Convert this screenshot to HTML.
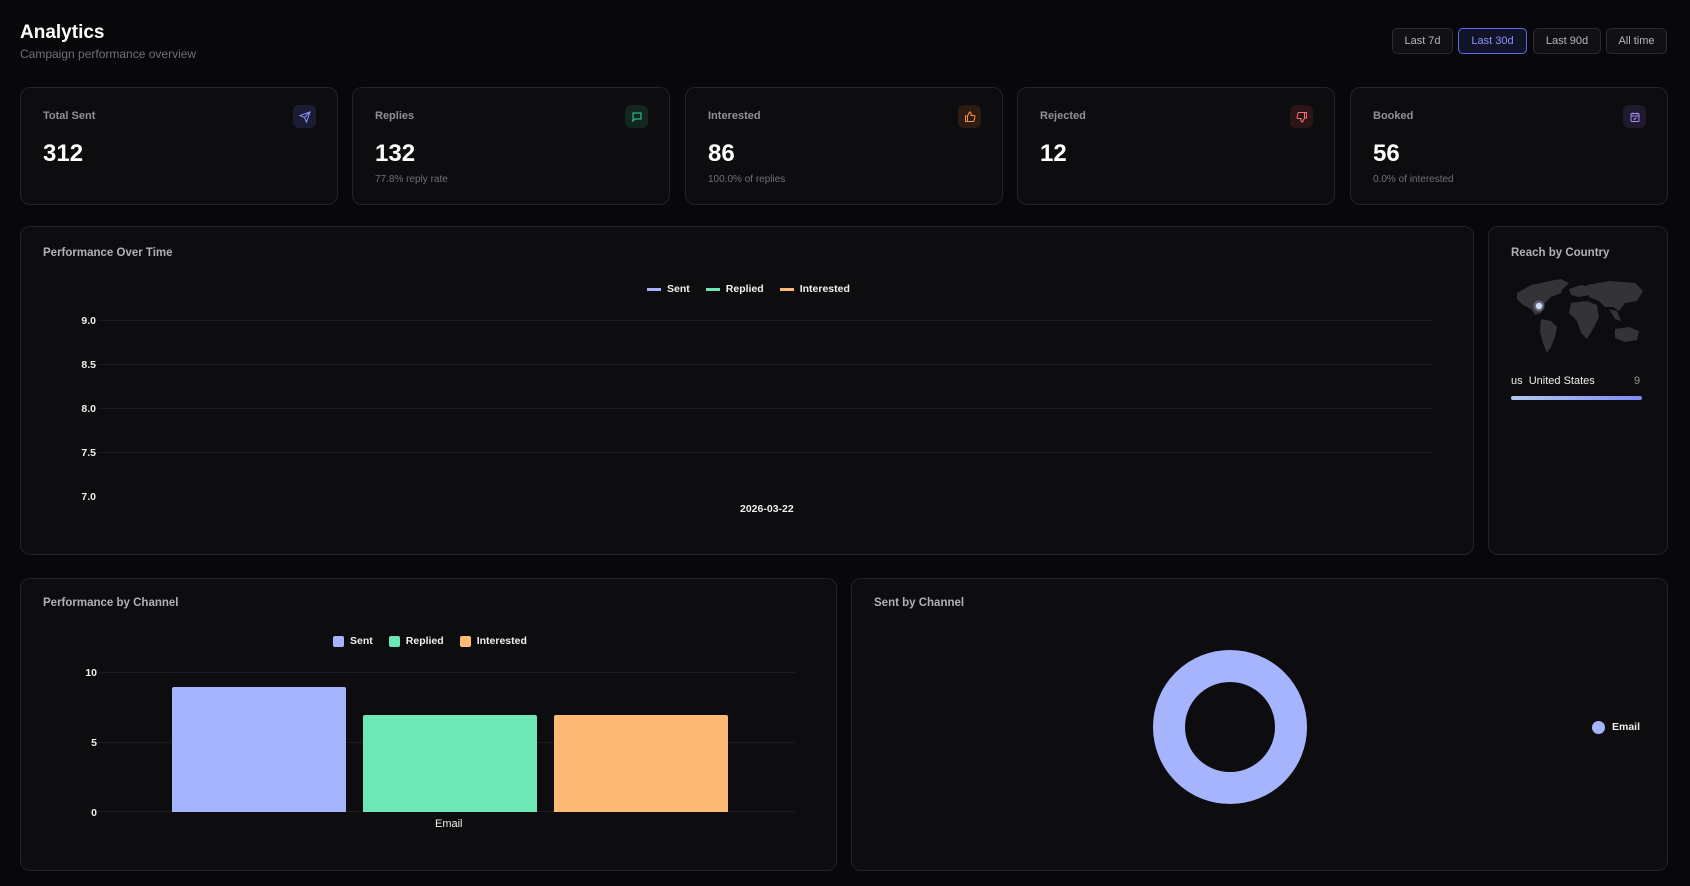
<!DOCTYPE html>
<html><head><meta charset="utf-8"><style>
*{box-sizing:border-box;margin:0;padding:0}
body{width:1690px;height:886px;background:#08080a;font-family:"Liberation Sans",sans-serif;color:#fff;position:relative;overflow:hidden}
.a{position:absolute}
.card{position:absolute;background:#0d0d10;border:1px solid #232328;border-radius:10px}
.lbl{position:absolute;font-size:11px;font-weight:bold;color:#8f8f97}
.val{position:absolute;font-size:24px;font-weight:bold;color:#fff}
.sub{position:absolute;font-size:10px;color:#6f6f77}
.ic{position:absolute;width:23px;height:23px;border-radius:6px;display:flex;align-items:center;justify-content:center}
.btn{position:absolute;top:28px;height:26px;border:1px solid #2a2a30;background:#111114;border-radius:5px;font-size:11px;color:#b5b5bd;display:flex;align-items:center;justify-content:center}
.ttl{position:absolute;font-size:11.5px;font-weight:bold;color:#b0b0b8}
.yl{position:absolute;font-size:10.5px;font-weight:bold;color:#eee;text-align:right;width:30px}
.gl{position:absolute;height:1px;background:#1c1c20}
.leg{position:absolute;font-size:10.5px;font-weight:bold;color:#f0f0f0;display:flex;align-items:center;gap:6px}
</style></head><body>
<div class="a" style="left:20px;top:22px;font-size:19px;font-weight:bold">Analytics</div>
<div class="a" style="left:20px;top:47px;font-size:12px;color:#707078">Campaign performance overview</div>
<div class="btn" style="left:1392px;width:61px">Last 7d</div>
<div class="btn" style="left:1458px;width:69px;border-color:#6366f1;color:#8b93ff;background:#111326">Last 30d</div>
<div class="btn" style="left:1533px;width:68px">Last 90d</div>
<div class="btn" style="left:1606px;width:61px">All time</div>

<div class="card" style="left:20px;top:87px;width:318px;height:118px">
<div class="lbl" style="left:22px;top:22px">Total Sent</div><div class="val" style="left:22px;top:52px">312</div>
<div class="ic" style="left:272px;top:17px;background:#1c1d33"><svg width="12" height="12" viewBox="0 0 24 24" fill="none" stroke="#8b93ff" stroke-width="2"><path d="M22 2L11 13M22 2l-7 20-4-9-9-4z"/></svg></div></div>
<div class="card" style="left:352px;top:87px;width:318px;height:118px">
<div class="lbl" style="left:22px;top:22px">Replies</div><div class="val" style="left:22px;top:52px">132</div><div class="sub" style="left:22px;top:86px">77.8% reply rate</div>
<div class="ic" style="left:272px;top:17px;background:#13271f"><svg width="12" height="12" viewBox="0 0 24 24" fill="none" stroke="#34d399" stroke-width="2"><path d="M4 4h16v12H8l-4 4z"/></svg></div></div>
<div class="card" style="left:685px;top:87px;width:318px;height:118px">
<div class="lbl" style="left:22px;top:22px">Interested</div><div class="val" style="left:22px;top:52px">86</div><div class="sub" style="left:22px;top:86px">100.0% of replies</div>
<div class="ic" style="left:272px;top:17px;background:#2c1c12"><svg width="12" height="12" viewBox="0 0 24 24" fill="none" stroke="#fb923c" stroke-width="2"><path d="M7 10v11H3V10zM7 10l4-8a3 3 0 013 3v4h6a2 2 0 012 2l-2 8a2 2 0 01-2 2H7"/></svg></div></div>
<div class="card" style="left:1017px;top:87px;width:318px;height:118px">
<div class="lbl" style="left:22px;top:22px">Rejected</div><div class="val" style="left:22px;top:52px">12</div>
<div class="ic" style="left:272px;top:17px;background:#2b1517"><svg width="12" height="12" viewBox="0 0 24 24" fill="none" stroke="#f87171" stroke-width="2"><path d="M17 14V3h4v11zM17 14l-4 8a3 3 0 01-3-3v-4H4a2 2 0 01-2-2l2-8a2 2 0 012-2h11"/></svg></div></div>
<div class="card" style="left:1350px;top:87px;width:318px;height:118px">
<div class="lbl" style="left:22px;top:22px">Booked</div><div class="val" style="left:22px;top:52px">56</div><div class="sub" style="left:22px;top:86px">0.0% of interested</div>
<div class="ic" style="left:272px;top:17px;background:#1f1a2e"><svg width="12" height="12" viewBox="0 0 24 24" fill="none" stroke="#a78bfa" stroke-width="2"><rect x="4" y="5" width="16" height="16" rx="2"/><path d="M8 3v4M16 3v4M4 10h16M9 15l2 2 4-4"/></svg></div></div>

<div class="card" style="left:20px;top:226px;width:1454px;height:329px">
<div class="ttl" style="left:22px;top:20px">Performance Over Time</div>
<div class="leg" style="left:626px;top:56px"><span style="width:14px;height:3px;background:#a5b4fc;display:inline-block"></span>Sent<span style="width:14px;height:3px;background:#6ee7b7;display:inline-block;margin-left:10px"></span>Replied<span style="width:14px;height:3px;background:#fdba74;display:inline-block;margin-left:10px"></span>Interested</div>
<div class="yl" style="left:45px;top:88px">9.0</div><div class="gl" style="left:77px;top:93px;width:1335px"></div>
<div class="yl" style="left:45px;top:132px">8.5</div><div class="gl" style="left:77px;top:137px;width:1335px"></div>
<div class="yl" style="left:45px;top:176px">8.0</div><div class="gl" style="left:77px;top:181px;width:1335px"></div>
<div class="yl" style="left:45px;top:220px">7.5</div><div class="gl" style="left:77px;top:225px;width:1335px"></div>
<div class="yl" style="left:45px;top:264px">7.0</div>
<div class="a" style="left:719px;top:276px;font-size:10.5px;font-weight:bold;color:#eee">2026-03-22</div>
</div>

<div class="card" style="left:1488px;top:226px;width:180px;height:329px">
<div class="ttl" style="left:22px;top:20px">Reach by Country</div>
<svg class="a" style="left:24px;top:52px" width="130" height="76" viewBox="0 0 130 76"><g fill="#333338">
<path d="M4 14l14-8 20-4 12 4-2 8-10 4-6 6-4 10-6 2-4-6-8-4-6-6z"/>
<path d="M36 2l12-2 8 4-6 6-10-1z"/>
<path d="M28 40l10 2 6 6-2 10-4 10-4 6-4-10-3-12z"/>
<path d="M56 10l12-4 10 2-2 8-10 2-8-2z"/>
<path d="M58 24l16-2 10 4 2 12-6 12-6 10-6-6-4-12-8-8z"/>
<path d="M74 6l22-4 26 2 8 8-6 10-12 2-6 8-6-4-8 0-6-6-10-4z"/>
<path d="M96 30l8 2 4 10-6-2z"/>
<path d="M102 50l14-2 10 4-2 9-12 2-10-4z"/></g>
<circle cx="26" cy="27" r="5.5" fill="#c7d7fb" opacity=".3"/><circle cx="26" cy="27" r="3.2" fill="#cbdaf8"/></svg>
<div class="a" style="left:22px;top:148px;font-size:11px;color:#eee">us&nbsp; United States</div>
<div class="a" style="left:145px;top:148px;font-size:11px;color:#999">9</div>
<div class="a" style="left:22px;top:169px;width:131px;height:4px;border-radius:2px;background:linear-gradient(90deg,#b4c9ee,#8088f4)"></div>
</div>

<div class="card" style="left:20px;top:578px;width:817px;height:293px">
<div class="ttl" style="left:22px;top:18px">Performance by Channel</div>
<div class="leg" style="left:312px;top:56px"><span style="width:11px;height:11px;background:#a5b4fc;border-radius:2px;display:inline-block"></span>Sent<span style="width:11px;height:11px;background:#6ee7b7;border-radius:2px;display:inline-block;margin-left:10px"></span>Replied<span style="width:11px;height:11px;background:#fdba74;border-radius:2px;display:inline-block;margin-left:10px"></span>Interested</div>
<div class="yl" style="left:46px;top:88px">10</div><div class="gl" style="left:77px;top:93px;width:698px"></div>
<div class="yl" style="left:46px;top:158px">5</div><div class="gl" style="left:77px;top:163px;width:698px"></div>
<div class="yl" style="left:46px;top:228px">0</div><div class="gl" style="left:77px;top:232px;width:698px"></div>
<div class="a" style="left:151px;top:108px;width:174px;height:125px;background:#a5b4fc;border-radius:2px 2px 0 0"></div>
<div class="a" style="left:342px;top:136px;width:174px;height:97px;background:#6ee7b7;border-radius:2px 2px 0 0"></div>
<div class="a" style="left:533px;top:136px;width:174px;height:97px;background:#fdba74;border-radius:2px 2px 0 0"></div>
<div class="a" style="left:414px;top:239px;font-size:11px;color:#eee">Email</div>
</div>

<div class="card" style="left:851px;top:578px;width:817px;height:293px">
<div class="ttl" style="left:22px;top:18px">Sent by Channel</div>
<svg class="a" style="left:300px;top:70px" width="156" height="156"><circle cx="78" cy="78" r="61" fill="none" stroke="#a5b4fc" stroke-width="32"/></svg>
<div class="a" style="left:740px;top:142px;width:13px;height:13px;border-radius:50%;background:#a5b4fc"></div>
<div class="a" style="left:760px;top:142px;font-size:10.5px;font-weight:bold;color:#eee">Email</div>
</div>
</body></html>
